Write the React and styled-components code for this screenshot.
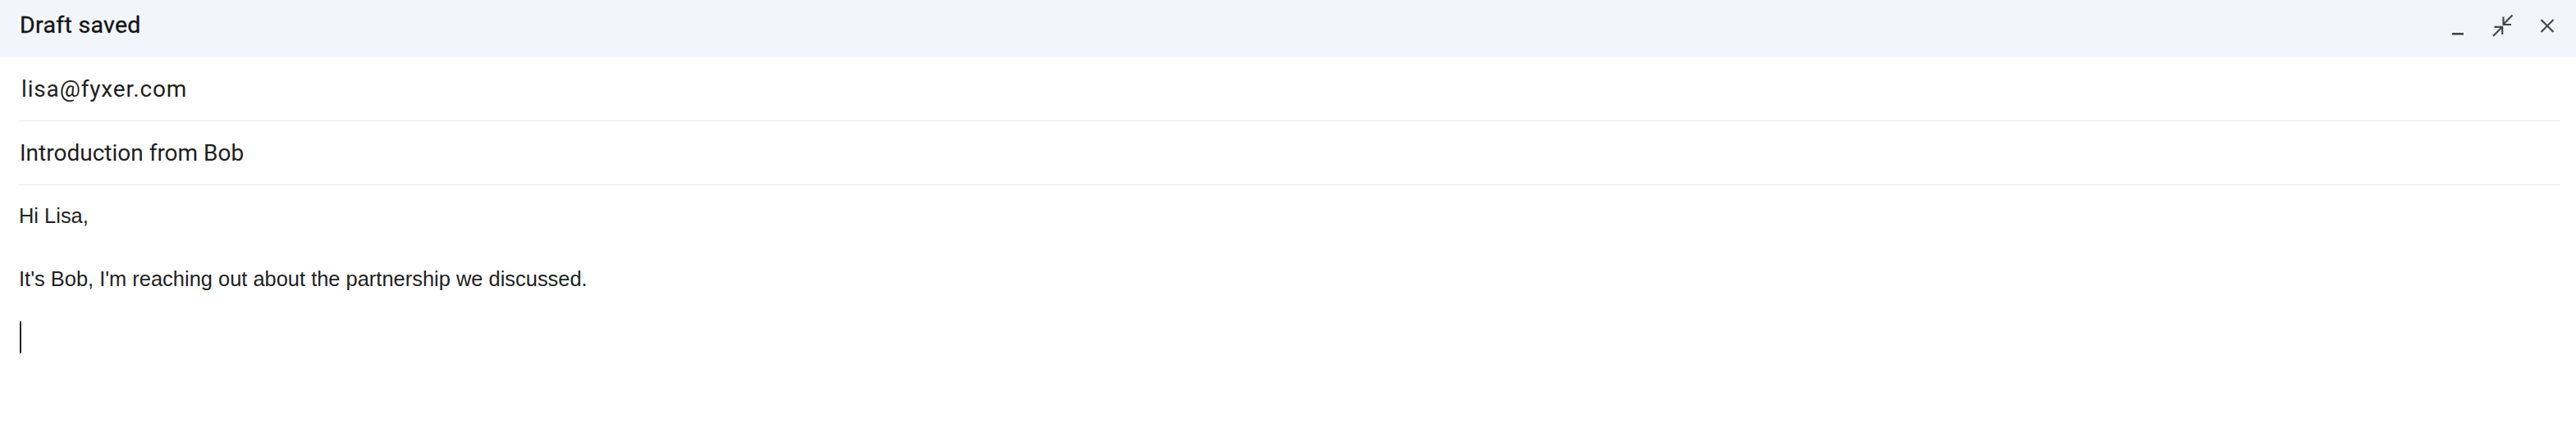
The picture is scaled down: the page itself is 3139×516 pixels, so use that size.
import React from "react";
import styled, { createGlobalStyle } from "styled-components";

const GlobalStyle = createGlobalStyle`
  html, body {
    margin: 0;
    padding: 0;
    background: #ffffff;
  }
  * { box-sizing: border-box; }
`;

const Compose = styled.div`
  width: 100%;
  height: 516px;
  background: #ffffff;
  display: flex;
  flex-direction: column;
  font-family: Roboto, "Noto Sans", sans-serif;
  color: #1f1f1f;
`;

const Header = styled.div`
  height: 70px;
  background: #f2f6fc;
  display: flex;
  align-items: flex-start;
  justify-content: space-between;
  padding: 0 15px 0 24px;
`;

const Title = styled.div`
  padding-top: 13px;
  font-size: 28.5px;
  line-height: 36px;
  font-weight: 400;
  letter-spacing: 0.3px;
  color: #141414;
  -webkit-text-stroke: 0.35px #141414;
`;

const Actions = styled.div`
  display: flex;
  gap: 14px;
  margin-top: 11px;
`;

const IconButton = styled.button`
  width: 40px;
  height: 40px;
  padding: 0;
  border: none;
  background: transparent;
  display: flex;
  align-items: center;
  justify-content: center;
  cursor: pointer;
  svg {
    display: block;
  }
`;

const Field = styled.div`
  height: 78px;
  margin: 0 20px 0 23px;
  border-bottom: 1px solid #e6eaf0;
  display: flex;
  align-items: center;
  padding-left: ${(p) => p.$indent || 1}px;
  font-size: 28px;
  letter-spacing: ${(p) => p.$tracking || 0}px;
  color: #1f1f1f;
  font-weight: 400;
`;

const Body = styled.div`
  padding: 17.7px 0 0 23px;
  font-family: "Liberation Sans", Arial, sans-serif;
  font-size: 25.45px;
  line-height: 38.5px;
  color: #222222;
`;

const Line = styled.div`
  min-height: 38.5px;
`;

const Caret = styled.div`
  width: 2px;
  height: 39px;
  margin: 32.8px 0 0 1px;
  background: #222222;
`;

const stroke = "#444746";

const MinimizeIcon = () => (
  <svg width="40" height="40" viewBox="0 0 40 40">
    <rect x="12" y="29" width="14" height="2.6" fill={stroke} />
  </svg>
);

const CompressIcon = () => (
  <svg width="40" height="40" viewBox="0 0 40 40" fill="none" stroke={stroke} strokeWidth="2.2">
    <path d="M31.5 7.5 L20.8 18.2" />
    <path d="M20.5 9.5 V19 H30" />
    <path d="M8 33 L18.7 22.3" />
    <path d="M9.5 21.8 H19.2 V31" />
  </svg>
);

const CloseIcon = () => (
  <svg width="40" height="40" viewBox="0 0 40 40" fill="none" stroke={stroke} strokeWidth="2.2">
    <path d="M12.5 13 L27.5 28" />
    <path d="M27.5 13 L12.5 28" />
  </svg>
);

export default function App() {
  return (
    <>
      <GlobalStyle />
      <Compose>
        <Header>
          <Title>Draft saved</Title>
          <Actions>
            <IconButton aria-label="Minimize">
              <MinimizeIcon />
            </IconButton>
            <IconButton aria-label="Exit full screen">
              <CompressIcon />
            </IconButton>
            <IconButton aria-label="Close">
              <CloseIcon />
            </IconButton>
          </Actions>
        </Header>
        <Field $indent={3} $tracking={0.85}>lisa@fyxer.com</Field>
        <Field $indent={1}>Introduction from Bob</Field>
        <Body>
          <Line>Hi Lisa,</Line>
          <Line>
            <br />
          </Line>
          <Line>It's Bob, I'm reaching out about the partnership we discussed.</Line>
          <Caret />
        </Body>
      </Compose>
    </>
  );
}
